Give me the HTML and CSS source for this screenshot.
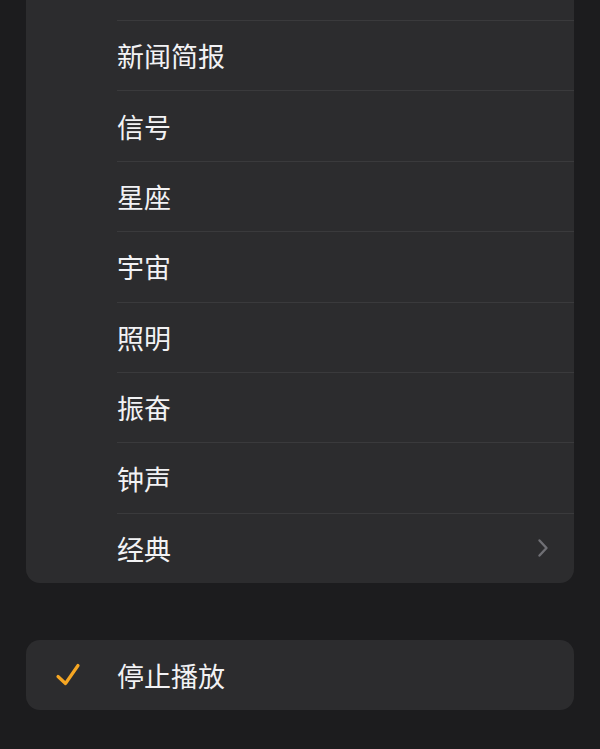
FILE: index.html
```html
<!DOCTYPE html>
<html lang="zh-CN">
<head>
<meta charset="utf-8">
<link rel="stylesheet" href="styles.css">
</head>
<body>
<div class="page">
  <div class="card list">
    <div class="row"><div class="cell"><span class="label"></span></div></div>
    <div class="row"><div class="cell"><span class="label">新闻简报</span></div></div>
    <div class="row"><div class="cell"><span class="label">信号</span></div></div>
    <div class="row"><div class="cell"><span class="label">星座</span></div></div>
    <div class="row"><div class="cell"><span class="label">宇宙</span></div></div>
    <div class="row"><div class="cell"><span class="label">照明</span></div></div>
    <div class="row"><div class="cell"><span class="label">振奋</span></div></div>
    <div class="row"><div class="cell"><span class="label">钟声</span></div></div>
    <div class="row"><div class="cell"><span class="label">经典</span>
      <svg class="chev" width="14" height="20" viewBox="0 0 14 20"><path d="M3.5 2.5 L10.5 10 L3.5 17.5" fill="none" stroke="#6f6f74" stroke-width="2.4" stroke-linecap="round" stroke-linejoin="round"/></svg>
    </div></div>
  </div>
  <div class="card single">
    <div class="row check-row">
      <div class="icon">
        <svg width="30" height="30" viewBox="0 0 30 30"><path d="M4 16.5 L11.5 23.5 L24 5.5" fill="none" stroke="#f5a623" stroke-width="3.2" stroke-linecap="round" stroke-linejoin="round"/></svg>
      </div>
      <div class="cell plain"><span class="label">停止播放</span></div>
    </div>
  </div>
</div>
</body>
</html>
```

FILE: styles.css
```css
html, body {
  margin: 0;
  padding: 0;
  background: #1c1c1e;
  height: 100%;
  overflow: hidden;
}
body {
  font-family: "Noto Sans CJK SC", "Noto Sans", sans-serif;
  color: #ffffff;
}
.page {
  display: flex;
  flex-direction: column;
  gap: 57px;
  padding: 0 26px;
}
.card {
  background: #2c2c2e;
  border-radius: 14px;
  overflow: hidden;
}
.list {
  margin-top: -50.4px;
}
.row {
  display: flex;
  height: 70.4px;
  padding-left: 91px;
}
.cell {
  flex: 1;
  display: flex;
  align-items: center;
  justify-content: space-between;
  border-top: 1px solid #3a3a3c;
  padding-right: 24px;
}
.row:first-child .cell {
  border-top: none;
}
.label {
  font-size: 27px;
  line-height: 1;
  color: #f2f2f4;
}
.chev {
  display: block;
}
.check-row {
  height: 70px;
  padding-left: 0;
}
.icon {
  width: 91px;
  display: flex;
  align-items: center;
  justify-content: flex-start;
  padding-left: 28px;
  box-sizing: border-box;
}
.icon svg {
  display: block;
}
.plain {
  border-top: none;
}
```
